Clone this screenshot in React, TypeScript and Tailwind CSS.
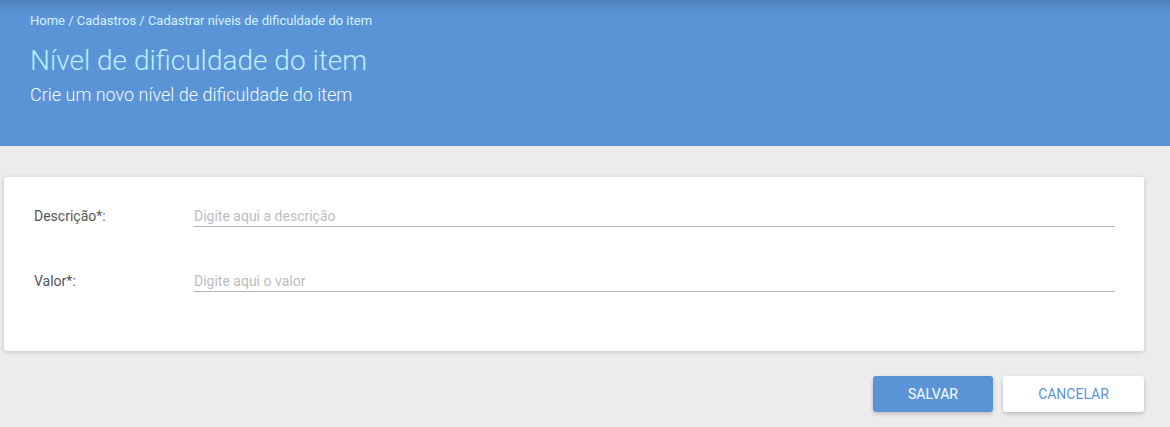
import React from "react";

export default function App() {
  return (
    <div className="min-h-[427px] w-full bg-[#ececec] font-['Roboto',sans-serif]">
      <header className="relative h-[146px] bg-[#5b94d6] px-[30px] pt-[12px]">
        <div className="pointer-events-none absolute inset-x-0 top-0 h-[14px] bg-gradient-to-b from-[#4d7fbb] to-[#5b94d6]" />
        <div className="relative">
          <nav className="text-[13px] leading-[18px] text-[#d2f3ff]">
            Home / Cadastros / Cadastrar níveis de dificuldade do item
          </nav>
          <h1 className="mt-[14px] text-[28px] font-light leading-[34px] text-[#b9efff]">
            Nível de dificuldade do item
          </h1>
          <p className="mt-[6px] text-[18px] font-light leading-[22px] text-[#f4faff]">
            Crie um novo nível de dificuldade do item
          </p>
        </div>
      </header>
      <main className="pl-[4px] pr-[26px] pt-[31px]">
        <section className="rounded-[3px] bg-white pb-[59px] pl-[30px] pr-[29px] pt-[28px] shadow-[0_1px_4px_rgba(0,0,0,0.18)]">
          <div className="flex items-center">
            <label className="w-[160px] text-[14px] leading-[20px] text-[#555]">Descrição*:</label>
            <input
              className="h-[22px] flex-1 border-b border-[#b4b4b4] bg-transparent text-[14px] text-[#555] outline-none placeholder:text-[#bdbdbd]"
              placeholder="Digite aqui a descrição"
            />
          </div>
          <div className="mt-[43px] flex items-center">
            <label className="w-[160px] text-[14px] leading-[20px] text-[#555]">Valor*:</label>
            <input
              className="h-[22px] flex-1 border-b border-[#b4b4b4] bg-transparent text-[14px] text-[#555] outline-none placeholder:text-[#bdbdbd]"
              placeholder="Digite aqui o valor"
            />
          </div>
        </section>
        <div className="mt-[25px] flex justify-end gap-[10px]">
          <button className="h-[36px] w-[120px] rounded-[3px] bg-[#5b94d6] text-[14px] text-white shadow-[0_2px_4px_rgba(0,0,0,0.2)]">
            SALVAR
          </button>
          <button className="h-[36px] w-[141px] rounded-[3px] bg-white text-[14px] text-[#5b94d6] shadow-[0_2px_4px_rgba(0,0,0,0.2)]">
            CANCELAR
          </button>
        </div>
      </main>
    </div>
  );
}
